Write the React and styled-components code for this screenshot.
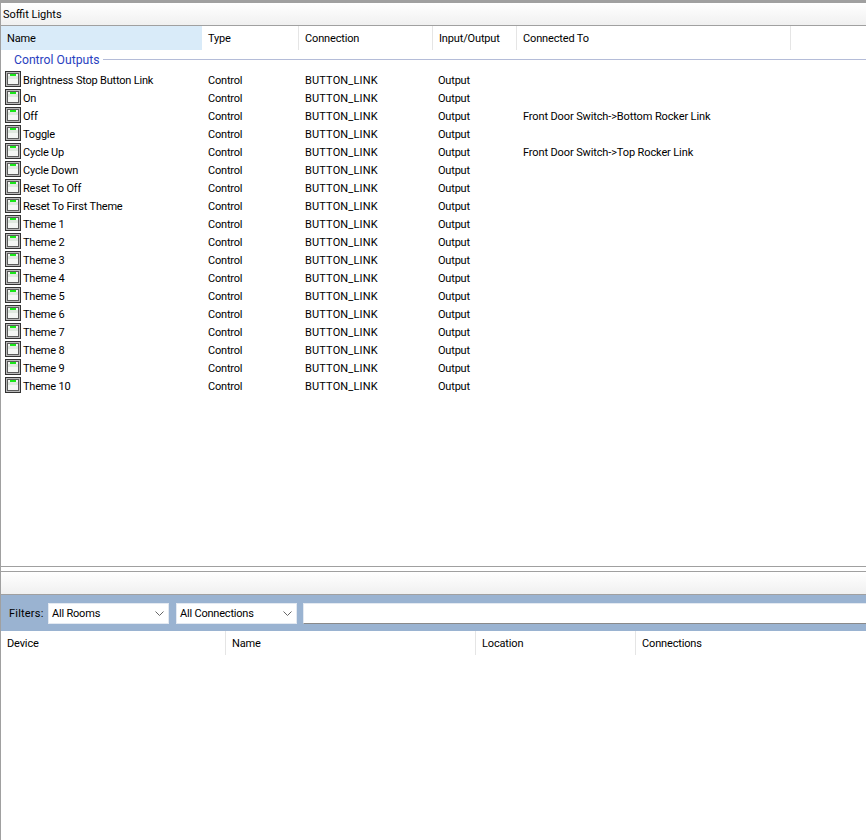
import styled, { createGlobalStyle } from 'styled-components';

const GlobalStyle = createGlobalStyle`
    html, body {
        margin: 0;
        padding: 0;
        background: #fff;
    }
    body {
        font-family: Roboto, "Liberation Sans", Arial, sans-serif;
        font-size: 11px;
        color: #000;
    }
`;

const rows = [
    { name: 'Brightness Stop Button Link' },
    { name: 'On' },
    { name: 'Off', to: 'Front Door Switch->Bottom Rocker Link' },
    { name: 'Toggle' },
    { name: 'Cycle Up', to: 'Front Door Switch->Top Rocker Link' },
    { name: 'Cycle Down' },
    { name: 'Reset To Off' },
    { name: 'Reset To First Theme' },
    { name: 'Theme 1' },
    { name: 'Theme 2' },
    { name: 'Theme 3' },
    { name: 'Theme 4' },
    { name: 'Theme 5' },
    { name: 'Theme 6' },
    { name: 'Theme 7' },
    { name: 'Theme 8' },
    { name: 'Theme 9' },
    { name: 'Theme 10' },
];

const LedIcon = () => (
    <LedSvg width="16" height="16" viewBox="0 0 16 16">
        <rect x="0.5" y="0.5" width="15" height="15" fill="#b8b8b8" stroke="#333" />
        <rect x="2.5" y="2.5" width="11" height="11" fill="#f4f6f4" stroke="#5c5c5c" />
        <rect x="3" y="5" width="10" height="3" fill="#dfe8df" />
        <rect x="5" y="3" width="6" height="2" fill="#18e818" />
    </LedSvg>
);

const Chevron = () => (
    <svg width="9" height="5" viewBox="0 0 9 5">
        <path d="M0.5 0.5 L4.5 4.5 L8.5 0.5" fill="none" stroke="#666" />
    </svg>
);

const App = () => (
    <Page>
        <GlobalStyle />
        <TitleBar>Soffit Lights</TitleBar>
        <TopHeader>
            <TopCell $width={201} $active>Name</TopCell>
            <TopCell $width={97}>Type</TopCell>
            <TopCell $width={134}>Connection</TopCell>
            <TopCell $width={84}>Input/Output</TopCell>
            <TopCell $width={274}>Connected To</TopCell>
        </TopHeader>
        <OutputList>
            <GroupTitle>
                <span>Control Outputs</span>
            </GroupTitle>
            {rows.map((row) => (
                <Row key={row.name}>
                    <NameCell>
                        <LedIcon />
                        <NameText>{row.name}</NameText>
                    </NameCell>
                    <TypeCell>Control</TypeCell>
                    <ConnectionCell>BUTTON_LINK</ConnectionCell>
                    <DirectionCell>Output</DirectionCell>
                    <LinkCell>{row.to}</LinkCell>
                </Row>
            ))}
        </OutputList>
        <Splitter />
        <GradientStrip />
        <FilterBar>
            <FilterLabel>Filters:</FilterLabel>
            <Dropdown>
                All Rooms
                <Chevron />
            </Dropdown>
            <Dropdown>
                All Connections
                <Chevron />
            </Dropdown>
            <SearchBox />
        </FilterBar>
        <BottomHeader>
            <BottomCell $width={225}>Device</BottomCell>
            <BottomCell $width={250}>Name</BottomCell>
            <BottomCell $width={160}>Location</BottomCell>
            <BottomCell $width={230} $last>Connections</BottomCell>
        </BottomHeader>
    </Page>
);

const Page = styled.div`
    width: 866px;
    height: 840px;
    box-sizing: border-box;
    border-top: 3px solid #a0a0a0;
    border-left: 1px solid #a0a0a0;
    display: flex;
    flex-direction: column;
    overflow: hidden;
    background: #fff;
`;

const TitleBar = styled.div`
    height: 22px;
    flex: none;
    padding-left: 2px;
    line-height: 24px;
    background: linear-gradient(#ffffff, #f0f0f0);
    border-bottom: 1px solid #a0a0a0;
`;

const TopHeader = styled.div`
    display: flex;
    height: 24px;
    flex: none;
`;

const TopCell = styled.div`
    width: ${(p) => p.$width}px;
    height: 24px;
    flex: none;
    box-sizing: border-box;
    padding-left: 6px;
    line-height: 26px;
    letter-spacing: -0.15px;
    background: ${(p) => (p.$active ? '#d9ebf9' : '#fff')};
    border-right: 1px solid ${(p) => (p.$active ? '#d9ebf9' : '#e5e5e5')};
`;

const OutputList = styled.div`
    flex: none;
    height: 516px;
    box-sizing: border-box;
`;

const GroupTitle = styled.div`
    height: 19px;
    margin-bottom: 2px;
    display: flex;
    align-items: center;
    padding-left: 13px;
    color: #2a3fc0;
    font-size: 12.2px;
    &::after {
        content: '';
        flex: 1;
        height: 1px;
        margin-left: 4px;
        background: #b4bcd8;
    }
`;

const Row = styled.div`
    display: flex;
    height: 18px;
    line-height: 18px;
    align-items: center;
    letter-spacing: -0.2px;
`;

const Cell = styled.div`
    white-space: nowrap;
    padding: 2px 0 0 6px;
`;

const NameCell = styled.div`
    width: 201px;
    flex: none;
    display: flex;
    align-items: center;
    padding-left: 4px;
    box-sizing: border-box;
`;

const LedSvg = styled.svg`
    flex: none;
    margin-bottom: 2px;
`;

const NameText = styled.span`
    margin-left: 2px;
    padding-top: 2px;
    white-space: nowrap;
`;

const TypeCell = styled(Cell)`
    width: 97px;
    flex: none;
    box-sizing: border-box;
`;

const ConnectionCell = styled(Cell)`
    width: 133px;
    flex: none;
    box-sizing: border-box;
    letter-spacing: 0.15px;
`;

const DirectionCell = styled(Cell)`
    width: 85px;
    flex: none;
    box-sizing: border-box;
`;

const LinkCell = styled(Cell)`
    letter-spacing: -0.12px;
`;

const Splitter = styled.div`
    flex: none;
    height: 4px;
    border-top: 1px solid #a0a0a0;
    border-bottom: 1px solid #a0a0a0;
    background: #fff;
`;

const GradientStrip = styled.div`
    flex: none;
    height: 22px;
    background: linear-gradient(#ffffff, #f0f0f0);
    border-bottom: 1px solid #a0a0a0;
`;

const FilterBar = styled.div`
    flex: none;
    height: 36px;
    display: flex;
    align-items: center;
    gap: 7px;
    padding-left: 8px;
    background: #9ab3d1;
`;

const FilterLabel = styled.span`
    width: 32px;
    flex: none;
    letter-spacing: 0.2px;
    white-space: nowrap;
`;

const Dropdown = styled.div`
    width: 121px;
    height: 21px;
    flex: none;
    box-sizing: border-box;
    padding: 0 4px 0 3px;
    display: flex;
    align-items: center;
    justify-content: space-between;
    letter-spacing: -0.2px;
    background: #fff;
    border: 1px solid #e3e9f1;
`;

const SearchBox = styled.div`
    flex: 1;
    height: 19px;
    margin-left: -1px;
    background: #fff;
    border-bottom: 1px solid #8a8a8a;
    border-top: 1px solid #e3e9f1;
    border-left: 1px solid #e3e9f1;
`;

const BottomHeader = styled.div`
    flex: none;
    display: flex;
    height: 24px;
`;

const BottomCell = styled.div`
    width: ${(p) => p.$width}px;
    height: 24px;
    flex: none;
    box-sizing: border-box;
    padding-left: 6px;
    line-height: 26px;
    letter-spacing: -0.15px;
    border-right: 1px solid ${(p) => (p.$last ? 'transparent' : '#e5e5e5')};
`;

export default App;
